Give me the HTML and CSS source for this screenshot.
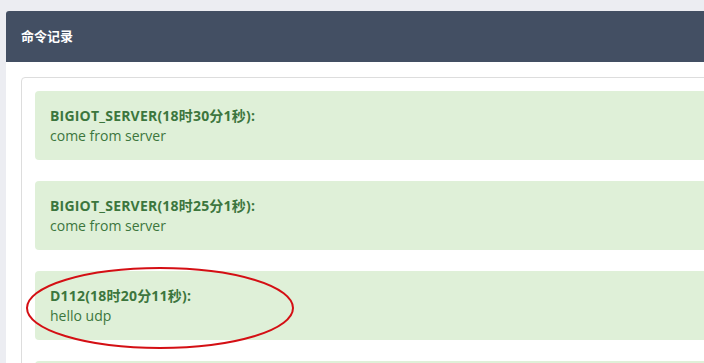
FILE: index.html
```html
<!DOCTYPE html>
<html lang="zh-CN">

<head>
    <meta charset="UTF-8">
    <meta name="viewport" content="width=device-width, initial-scale=1.0">
    <title>命令记录</title>
    <link rel="stylesheet" href="styles.css">
</head>

<body>
    <div class="panel">
        <div class="panel-heading">命令记录</div>
        <div class="panel-body">
            <div class="log-box">
                <div class="alert">
                    <strong>BIGIOT_SERVER(18时30分1秒):</strong>
                    <p>come from server</p>
                </div>
                <div class="alert">
                    <strong>BIGIOT_SERVER(18时25分1秒):</strong>
                    <p>come from server</p>
                </div>
                <div class="alert marked">
                    <strong>D112(18时20分11秒):</strong>
                    <p>hello udp</p>
                    <!-- 红圈标注 -->
                    <svg class="circle" width="272" height="84" viewBox="0 0 272 84">
                        <ellipse cx="136" cy="42" rx="133" ry="40" fill="none" stroke="#d40f14" stroke-width="2" />
                    </svg>
                </div>
                <!-- 下一条记录，超出画面 -->
                <div class="alert empty"></div>
            </div>
        </div>
    </div>
</body>

</html>
```
FILE: styles.css
```css
body {
    margin: 0;
    padding: 11px 0 0 6px;
    background: #ecedf2;
    overflow: hidden;
    font-family: "Open Sans", "Noto Sans CJK SC", sans-serif;
    font-size: 14px;
}

.panel {
    width: 760px;
    background: #fff;
    border-radius: 3px 0 0 0;
}

.panel-heading {
    height: 51px;
    line-height: 51px;
    padding-left: 15px;
    background: #434f63;
    color: #fff;
    font-size: 13px;
    font-weight: bold;
    border-radius: 3px 0 0 0;
}

.panel-body {
    padding: 15px 0 0 15px;
}

.log-box {
    border: 1px solid #ddd;
    border-radius: 4px;
    padding: 13px 0 0 13px;
}

.alert {
    position: relative;
    background: #dff0d8;
    color: #3c763d;
    border-radius: 4px;
    padding: 15px 15px 14px;
    margin-bottom: 21px;
    line-height: 20px;
}

.alert.empty {
    height: 40px;
}

.alert strong {
    display: block;
    letter-spacing: 0.2px;
}

.alert p {
    margin: 0;
}

.alert .circle {
    position: absolute;
    left: -11px;
    top: -5px;
}
```
